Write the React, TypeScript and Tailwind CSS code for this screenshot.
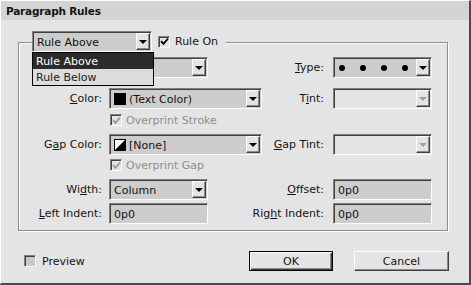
import React from 'react'

// sunken 3D edge used by fields, dropdowns and checkboxes
const INSET =
  'border border-t-[#808080] border-l-[#808080] border-b-white border-r-white shadow-[inset_1px_1px_0_#404040]'

function Arrow({ disabled }: { disabled?: boolean }) {
  return (
    <div className="w-[14px] my-[1px] mr-[1px] bg-[#e4e4e4] border border-t-white border-l-white border-b-[#404040] border-r-[#404040] shadow-[inset_-1px_-1px_0_#8a8a8a] flex items-center justify-center">
      <div
        className={`w-0 h-0 border-l-[4px] border-r-[4px] border-t-[4px] border-l-transparent border-r-transparent ${
          disabled ? 'border-t-[#a0a0a0]' : 'border-t-black'
        }`}
      />
    </div>
  )
}

function Dropdown({ w, disabled, children }: { w: string; disabled?: boolean; children?: React.ReactNode }) {
  return (
    <div className={`${w} shrink-0 h-[21px] flex items-stretch ${INSET} ${disabled ? 'bg-[#e4e4e4]' : 'bg-[#cdcdcd]'}`}>
      <div className="flex-1 flex items-center pl-[4px] pt-[1px] overflow-hidden whitespace-nowrap">{children}</div>
      <Arrow disabled={disabled} />
    </div>
  )
}

function Field({ w, value }: { w: string; value: string }) {
  return (
    <div className={`${w} shrink-0 h-[21px] ${INSET} bg-[#cdcdcd] flex items-center pl-[4px] pt-[1px]`}>{value}</div>
  )
}

function Check({ checked, disabled, bg = 'bg-[#e4e4e4]' }: { checked?: boolean; disabled?: boolean; bg?: string }) {
  return (
    <div className={`w-[12px] h-[12px] shrink-0 ${INSET} ${bg} flex items-center justify-center`}>
      {checked && (
        <svg width="9" height="9" viewBox="0 0 9 9">
          <path
            d="M1 4.2 L3.4 6.8 L8 1.6"
            fill="none"
            stroke={disabled ? '#9a9a9a' : '#000'}
            strokeWidth="1.8"
          />
        </svg>
      )}
    </div>
  )
}

function Row({ children, className = '' }: { children: React.ReactNode; className?: string }) {
  return <div className={`flex items-center h-[21px] ${className}`}>{children}</div>
}

// left half of a row: right-aligned label, then its control
function Left({ label, children }: { label?: React.ReactNode; children: React.ReactNode }) {
  return (
    <div className="w-[227px] shrink-0 flex items-center">
      <div className="w-[84px] shrink-0 text-right pr-[1px] whitespace-nowrap">{label}</div>
      <div className="ml-[6px] shrink-0">{children}</div>
    </div>
  )
}

function RightLabel({ children }: { children: React.ReactNode }) {
  return <div className="w-[80px] shrink-0 text-right pr-[2px] mr-[7px] whitespace-nowrap">{children}</div>
}

function Dots() {
  return (
    <div className="flex gap-[15px] pl-[1px]">
      <div className="w-[6px] h-[6px] rounded-full bg-black" />
      <div className="w-[6px] h-[6px] rounded-full bg-black" />
      <div className="w-[6px] h-[6px] rounded-full bg-black" />
      <div className="w-[6px] h-[6px] rounded-full bg-black" />
    </div>
  )
}

export default function App() {
  return (
    <div className="w-[471px] h-[285px] bg-[#e4e4e4] border-t border-l border-t-white border-l-white border-r-2 border-b-2 border-r-[#4a4a4a] border-b-[#4a4a4a] font-['DejaVu_Sans',sans-serif] text-[11px] leading-none text-[#141414] flex flex-col overflow-hidden">
      {/* title bar */}
      <div className="h-[19px] bg-[#d4d4d4] flex items-center pl-[5px] pt-[2px] font-bold text-[10.5px] tracking-[-0.2px]">
        Paragraph Rules
      </div>

      {/* group box */}
      <div className="pl-[17px] pt-[22px]">
        <div className="relative w-[430px] h-[189px] border border-[#8c8c8c] shadow-[inset_1px_1px_0_#fff,1px_1px_0_#fff] pt-[14px]">
          {/* legend: rule selector + rule on */}
          <div className="absolute left-[13px] top-[-12px] flex items-center bg-[#e4e4e4] pr-[8px]">
            <Dropdown w="w-[120px]">Rule Above</Dropdown>
            <div className="ml-[6px]">
              <Check checked />
            </div>
            <span className="ml-[5px]">Rule On</span>
          </div>

          <Row>
            <Left>
              <Dropdown w="w-[99px]" />
            </Left>
            <RightLabel>
              <u>T</u>ype:
            </RightLabel>
            <Dropdown w="w-[99px]">
              <Dots />
            </Dropdown>
          </Row>

          <Row className="mt-[10px]">
            <Left
              label={
                <>
                  <u>C</u>olor:
                </>
              }
            >
              <Dropdown w="w-[153px]">
                <div className="w-[12px] h-[12px] bg-black mr-[3px] shrink-0" />
                (Text Color)
              </Dropdown>
            </Left>
            <RightLabel>
              T<u>i</u>nt:
            </RightLabel>
            <Dropdown w="w-[99px]" disabled />
          </Row>

          <div className="flex items-center h-[12px] mt-[5px] pl-[91px] text-[#8e8e8e]">
            <Check checked disabled />
            <span className="ml-[4px]">Overprint Stroke</span>
          </div>

          <Row className="mt-[8px]">
            <Left
              label={
                <>
                  G<u>a</u>p Color:
                </>
              }
            >
              <Dropdown w="w-[153px]">
                <svg width="12" height="12" viewBox="0 0 12 12" className="mr-[3px] shrink-0">
                  <rect x="0.5" y="0.5" width="11" height="11" fill="#fff" stroke="#000" />
                  <path d="M12 0 L12 12 L0 12 Z" fill="#000" />
                </svg>
                [None]
              </Dropdown>
            </Left>
            <RightLabel>
              <u>G</u>ap Tint:
            </RightLabel>
            <Dropdown w="w-[99px]" disabled />
          </Row>

          <div className="flex items-center h-[12px] mt-[4px] pl-[91px] text-[#8e8e8e]">
            <Check checked disabled />
            <span className="ml-[4px]">Overprint Gap</span>
          </div>

          <Row className="mt-[8px]">
            <Left
              label={
                <>
                  Wi<u>d</u>th:
                </>
              }
            >
              <Dropdown w="w-[99px]">Column</Dropdown>
            </Left>
            <RightLabel>
              <u>O</u>ffset:
            </RightLabel>
            <Field w="w-[99px]" value="0p0" />
          </Row>

          <Row className="mt-[3px]">
            <Left
              label={
                <>
                  <u>L</u>eft Indent:
                </>
              }
            >
              <Field w="w-[99px]" value="0p0" />
            </Left>
            <RightLabel>
              Rig<u>h</u>t Indent:
            </RightLabel>
            <Field w="w-[99px]" value="0p0" />
          </Row>

          {/* open menu of the rule selector */}
          <div className="absolute left-[13px] top-[9px] w-[122px] border border-black bg-[#dcdcdc]">
            <div className="h-[16px] bg-[#2b2b2b] text-white flex items-center pl-[3px]">Rule Above</div>
            <div className="h-[16px] flex items-center pl-[3px] text-[#222]">Rule Below</div>
          </div>
        </div>
      </div>

      {/* footer */}
      <div className="flex items-center h-[20px] mt-[20px] pl-[23px] pr-[20px]">
        <Check bg="bg-[#c8c8c8]" />
        <span className="ml-[6px]">Preview</span>
        <div className="flex-1" />
        <button className="w-[84px] h-[20px] border border-black bg-[#e4e4e4] shadow-[inset_1px_1px_0_#fff,inset_-1px_-1px_0_#404040,inset_-2px_-2px_0_#8a8a8a] flex items-center justify-center">
          OK
        </button>
        <button className="ml-[21px] w-[95px] h-[20px] border border-t-white border-l-white border-b-[#404040] border-r-[#404040] bg-[#e4e4e4] shadow-[inset_-1px_-1px_0_#8a8a8a] flex items-center justify-center">
          Cancel
        </button>
      </div>
    </div>
  )
}
